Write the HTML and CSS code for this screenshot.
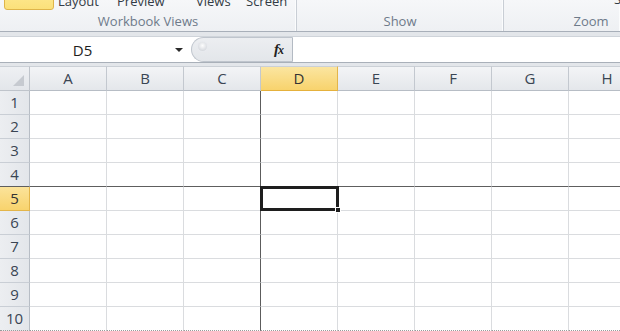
FILE: index.html
```html
<!DOCTYPE html>
<html>
<head>
<meta charset="utf-8">
<link rel="stylesheet" href="styles.css">
</head>
<body>
<div class="app">
  <div class="ribbon">
    <div class="group wb">
      <div class="toprow">
        <span class="ybtn"></span>
        <span class="lbl l1">Layout</span>
        <span class="lbl l2">Preview</span>
        <span class="lbl l3">Views</span>
        <span class="lbl l4">Screen</span>
      </div>
      <div class="gname">Workbook Views</div>
    </div>
    <div class="group show">
      <div class="toprow"></div>
      <div class="gname">Show</div>
    </div>
    <div class="group zoom">
      <div class="toprow"><span class="lbl s">S</span></div>
      <div class="gname">Zoom</div>
    </div>
  </div>
  <div class="band"></div>
  <div class="fbar">
    <div class="namebox"><span class="nb-text">D5</span><span class="arrow"></span></div>
    <div class="pill"><span class="grip"></span><span class="fx"><i>f</i><i class="x">x</i></span></div>
    <div class="finput"></div>
  </div>
  <div class="band2"></div>
  <div class="sheet">
    <div class="corner"><span class="tri"></span></div>
    <div class="ch">A</div><div class="ch">B</div><div class="ch">C</div><div class="ch sel">D</div><div class="ch">E</div><div class="ch">F</div><div class="ch">G</div><div class="ch">H</div>

    <div class="rh">1</div><div class="c"></div><div class="c"></div><div class="c fc"></div><div class="c"></div><div class="c"></div><div class="c"></div><div class="c"></div><div class="c"></div>
    <div class="rh">2</div><div class="c"></div><div class="c"></div><div class="c fc"></div><div class="c"></div><div class="c"></div><div class="c"></div><div class="c"></div><div class="c"></div>
    <div class="rh">3</div><div class="c"></div><div class="c"></div><div class="c fc"></div><div class="c"></div><div class="c"></div><div class="c"></div><div class="c"></div><div class="c"></div>
    <div class="rh fr">4</div><div class="c fr"></div><div class="c fr"></div><div class="c fc fr"></div><div class="c fr"></div><div class="c fr"></div><div class="c fr"></div><div class="c fr"></div><div class="c fr"></div>
    <div class="rh sel">5</div><div class="c"></div><div class="c"></div><div class="c fc"></div><div class="c active"><span class="selbox"><span class="handle"></span></span></div><div class="c"></div><div class="c"></div><div class="c"></div><div class="c"></div>
    <div class="rh">6</div><div class="c"></div><div class="c"></div><div class="c fc"></div><div class="c"></div><div class="c"></div><div class="c"></div><div class="c"></div><div class="c"></div>
    <div class="rh">7</div><div class="c"></div><div class="c"></div><div class="c fc"></div><div class="c"></div><div class="c"></div><div class="c"></div><div class="c"></div><div class="c"></div>
    <div class="rh">8</div><div class="c"></div><div class="c"></div><div class="c fc"></div><div class="c"></div><div class="c"></div><div class="c"></div><div class="c"></div><div class="c"></div>
    <div class="rh">9</div><div class="c"></div><div class="c"></div><div class="c fc"></div><div class="c"></div><div class="c"></div><div class="c"></div><div class="c"></div><div class="c"></div>
    <div class="rh last">10</div><div class="c last"></div><div class="c last"></div><div class="c fc last"></div><div class="c last"></div><div class="c last"></div><div class="c last"></div><div class="c last"></div><div class="c last"></div>
  </div>
</div>
</body>
</html>
```
FILE: styles.css
```css
* { box-sizing: border-box; }
html, body { margin: 0; padding: 0; }
body {
  width: 620px;
  height: 331px;
  overflow: hidden;
  background: #fff;
  font-family: "Open Sans", "Liberation Sans", sans-serif;
}
.app { width: 620px; height: 331px; overflow: hidden; }

/* Ribbon */
.ribbon {
  height: 32px;
  display: flex;
  background: linear-gradient(#f6f7f9, #eef0f3);
  border-bottom: 1px solid #a8afb9;
  overflow: hidden;
}
.group {
  display: flex;
  flex-direction: column;
  border-right: 1px solid #c9ced5;
  height: 31px;
  box-shadow: inset -1px 0 0 #fbfcfd;
}
.group.wb { width: 297px; }
.group.show { width: 207px; }
.group.zoom { flex: 1; border-right: none; }
.toprow {
  height: 12px;
  position: relative;
  overflow: hidden;
}
.ybtn {
  position: absolute;
  left: 4px; top: -6px;
  width: 50px; height: 16px;
  border: 1px solid #dfb54a;
  border-radius: 3px;
  background: linear-gradient(#fde88e, #fbe07a);
}
.lbl {
  position: absolute;
  top: -7px;
  font-size: 13px;
  line-height: 16px;
  color: #333b45;
}
.l1 { left: 58px; }
.l2 { left: 117px; }
.l3 { left: 196px; }
.l4 { left: 246px; }
.s { left: 110px; top: -9px; }
.gname {
  flex: 1;
  text-align: center;
  font-size: 13px;
  line-height: 16px;
  color: #6e7a8a;
  padding-top: 1px;
}
.zoom .gname { padding-left: 58px; }

.band {
  height: 4px;
  background: #e3e6ea;
}

/* Formula bar */
.fbar {
  height: 27px;
  display: flex;
  border-top: 1px solid #cfd4da;
  border-bottom: 1px solid #a9b0b9;
  background: #fff;
}
.namebox {
  width: 191px;
  display: flex;
  align-items: center;
  background: #fff;
}
.nb-text {
  width: 165px;
  text-align: center;
  font-size: 15px;
  color: #1e1e1e;
}
.arrow {
  margin-left: 10px;
  width: 0; height: 0;
  border-left: 4px solid transparent;
  border-right: 4px solid transparent;
  border-top: 4px solid #2b2b2b;
}
.pill {
  width: 102px;
  display: flex;
  align-items: center;
  justify-content: space-between;
  background: linear-gradient(#eceef1, #e3e6ea);
  border: 1px solid #bfc5cd;
  border-right: 1px solid #b3bac3;
  border-radius: 13px 0 0 13px;
  padding: 0 9px 0 6px;
}
.grip {
  width: 9px; height: 9px;
  border-radius: 50%;
  margin-top: -7px;
  background: radial-gradient(circle at 50% 40%, #fdfdfd, #d8dbe0 70%);
  box-shadow: 0 0 0 1px #e8eaee;
}
.fx {
  font-family: "Liberation Serif", serif;
  font-size: 15px;
  font-weight: bold;
  color: #222;
  letter-spacing: -1px;
}
.fx .x { font-size: 12px; }
.finput { flex: 1; background: #fff; }

.band2 {
  height: 3px;
  background: #e3e6ea;
}

/* Sheet */
.sheet {
  display: grid;
  grid-template-columns: 30px repeat(8, 77px);
  grid-template-rows: 25px repeat(10, 24px);
}
.corner {
  background: linear-gradient(#eef0f3, #e3e6ea);
  border-right: 1px solid #bfc4cb;
  border-bottom: 1px solid #bfc4cb;
  border-top: 1px solid #cbd0d6;
  position: relative;
}
.tri {
  position: absolute;
  right: 5px; bottom: 4px;
  width: 0; height: 0;
  border-left: 11px solid transparent;
  border-bottom: 11px solid #c6cad0;
}
.ch {
  background: linear-gradient(#f3f4f6, #e4e7eb);
  border-top: 1px solid #cbd0d6;
  border-right: 1px solid #c3c8cf;
  border-bottom: 1px solid #b7bdc5;
  text-align: center;
  font-size: 15px;
  line-height: 23px;
  color: #3a4553;
}
.ch.sel {
  background: linear-gradient(#fbe5a0, #f8d36d);
  border-right-color: #e3b54a;
  border-bottom-color: #e5b13c;
  color: #333;
}
.rh {
  background: linear-gradient(90deg, #eceef1, #e3e6ea);
  border-right: 1px solid #b7bdc5;
  border-bottom: 1px solid #c9ced5;
  font-size: 15px;
  line-height: 23px;
  text-align: center;
  color: #3a4553;
}
.rh.sel {
  background: linear-gradient(#fbe39a, #f8d36d);
  border-bottom-color: #e3b54a;
  border-right-color: #e3b54a;
  color: #333;
}
.c {
  border-right: 1px solid #dadcdf;
  border-bottom: 1px solid #dadcdf;
  background: #fff;
}
.c.fc { border-right: 1px solid #5c5c5c; }
.fr { border-bottom: 1px solid #5e5e5e !important; }
.rh.last, .c.last { border-bottom: 1px dotted #9a9a9a; }
.active { position: relative; }
.selbox {
  position: absolute;
  left: -1px; top: -1px; right: -2px; bottom: -1px;
  border: 3px solid #1e1e1e;
}
.handle {
  position: absolute;
  right: -5px; bottom: -5px;
  width: 6px; height: 6px;
  background: #1e1e1e;
  border: 1px solid #fff;
}
```
